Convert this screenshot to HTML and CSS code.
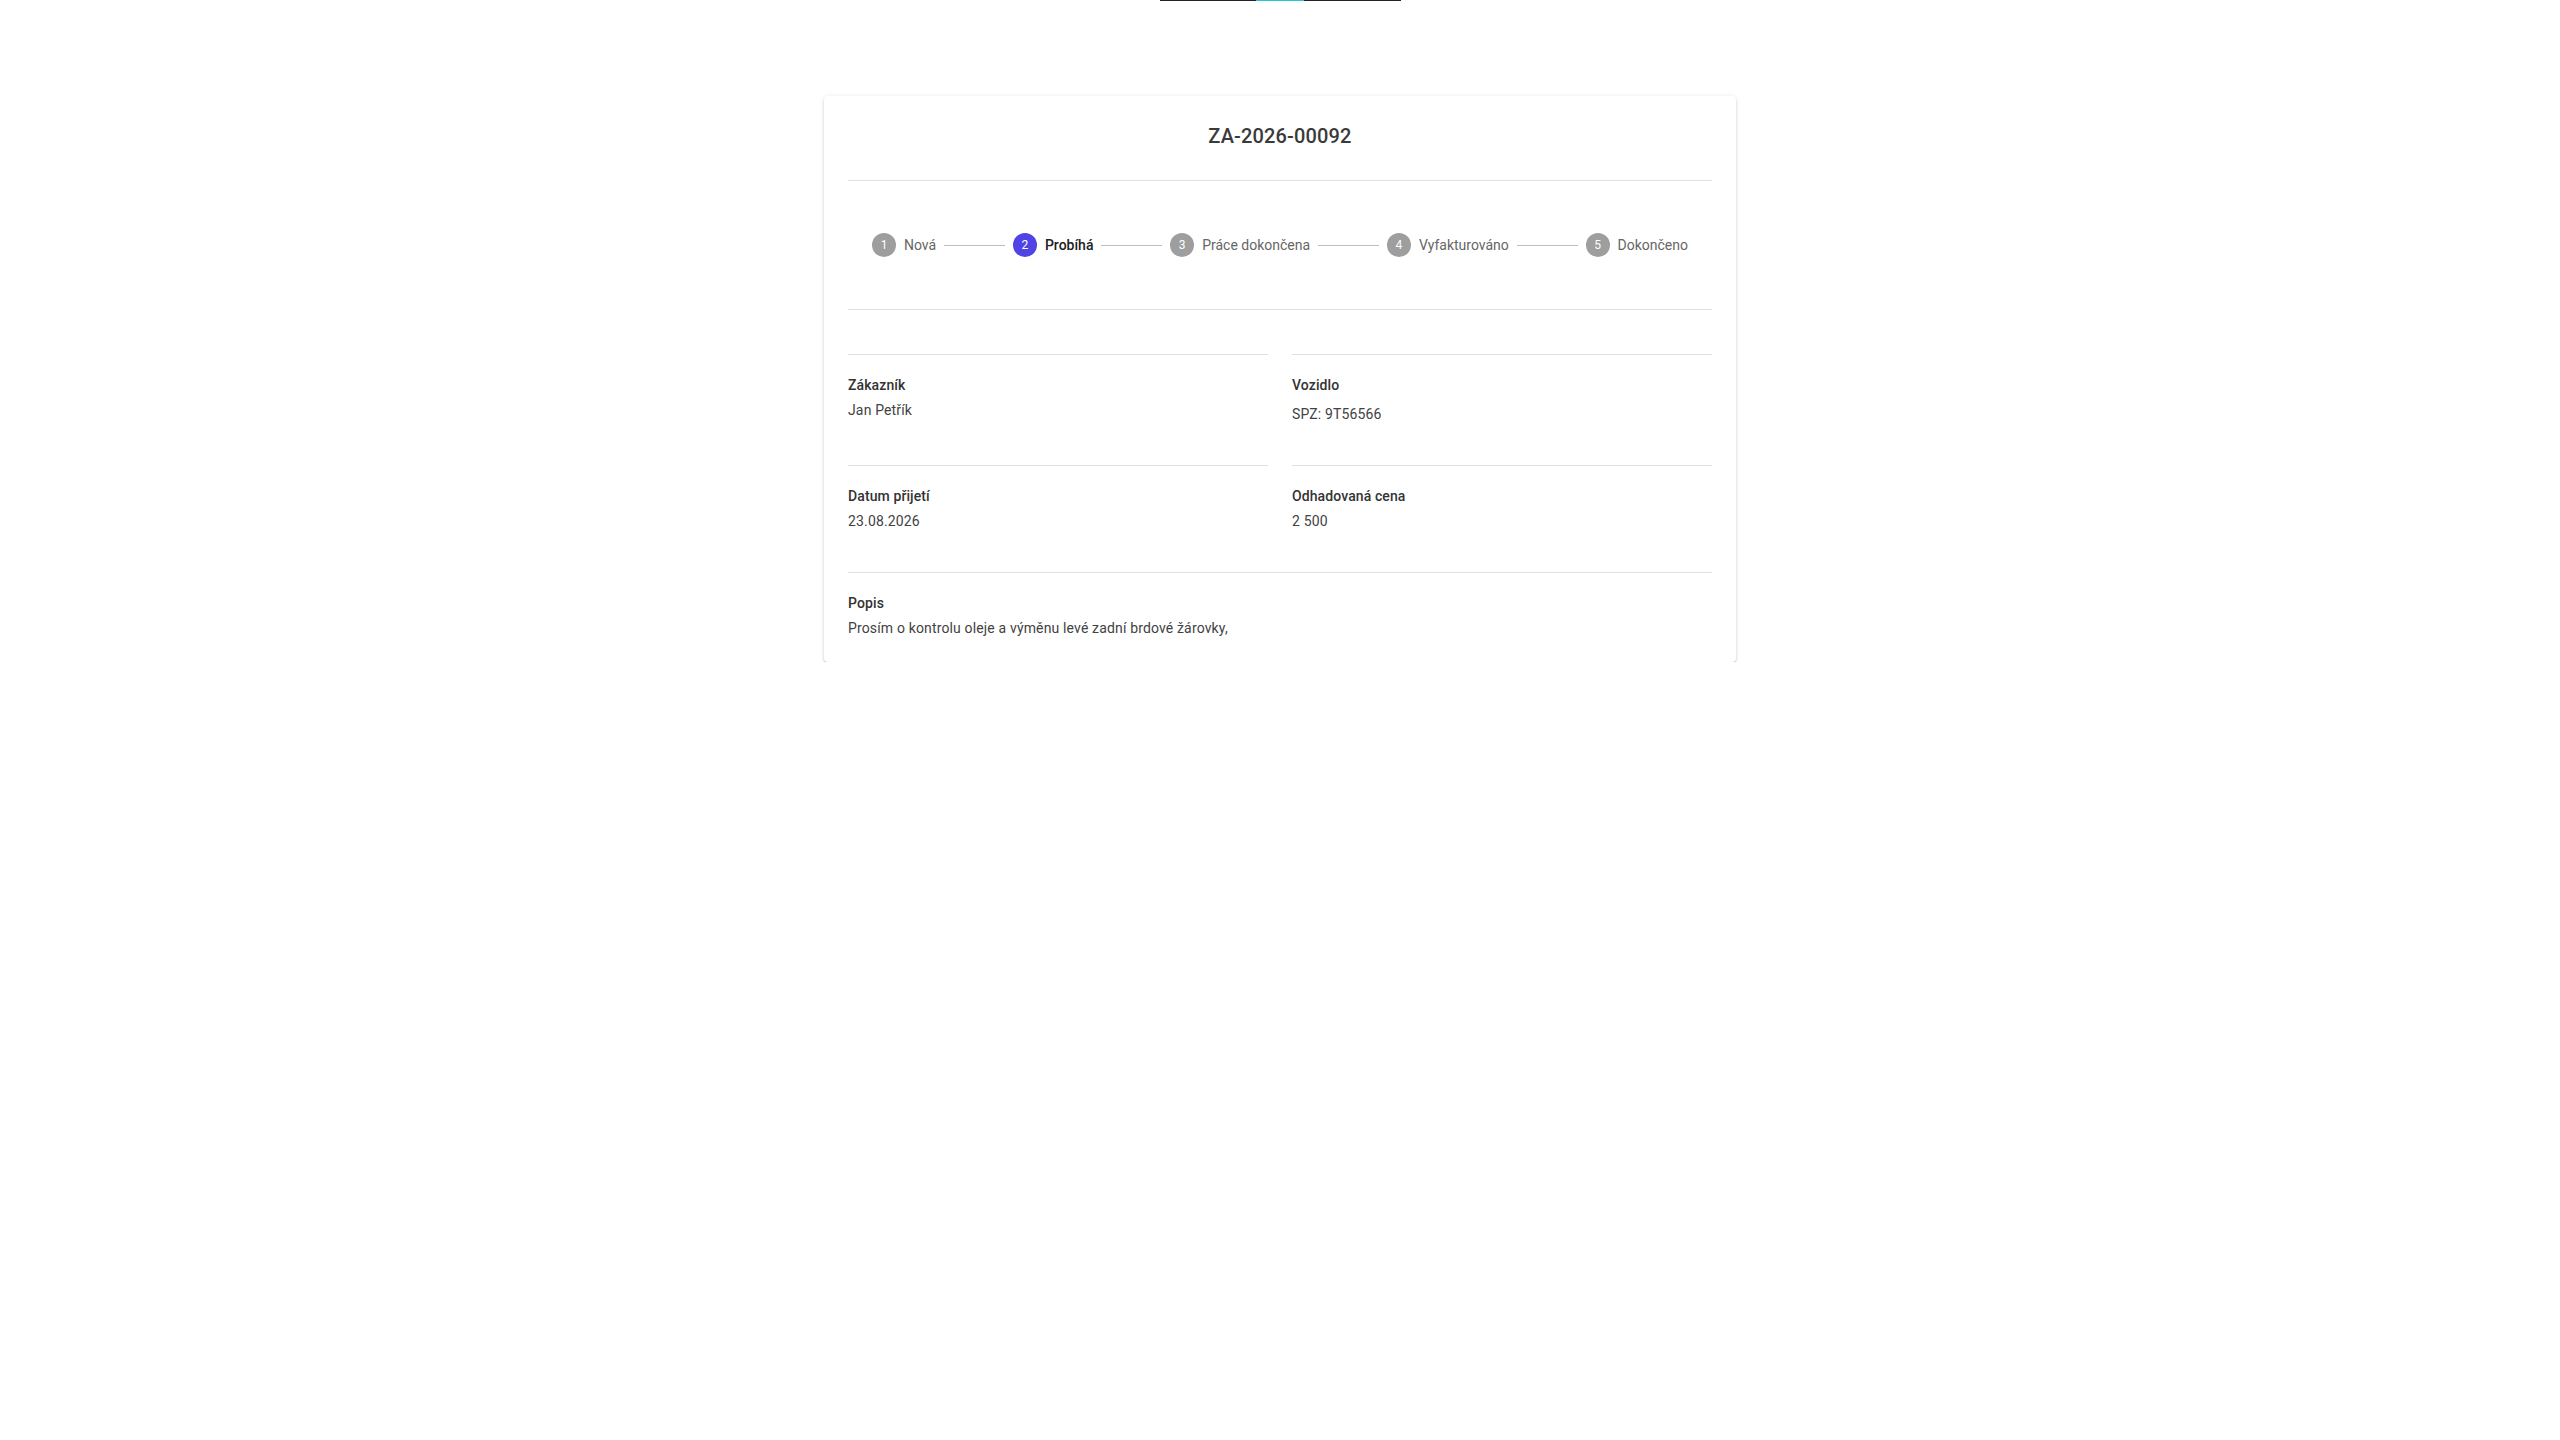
FILE: index.html
```html
<!DOCTYPE html>
<html lang="cs">

<head>
  <meta charset="UTF-8">
  <meta name="viewport" content="width=device-width, initial-scale=1.0">
  <title>ZA-2026-00092</title>
  <link rel="stylesheet" href="styles.css">
</head>

<body>
  <div class="tabs-bar">
    <div class="tabs-track">
      <span class="tabs-indicator"></span>
    </div>
  </div>

  <div class="order-card">
    <h2 class="order-title">ZA-2026-00092</h2>

    <div class="stepper">
      <div class="step">
        <span class="step-icon">1</span>
        <span class="step-label">Nová</span>
      </div>
      <div class="step-connector"></div>
      <div class="step active">
        <span class="step-icon">2</span>
        <span class="step-label">Probíhá</span>
      </div>
      <div class="step-connector"></div>
      <div class="step">
        <span class="step-icon">3</span>
        <span class="step-label">Práce dokončena</span>
      </div>
      <div class="step-connector"></div>
      <div class="step">
        <span class="step-icon">4</span>
        <span class="step-label">Vyfakturováno</span>
      </div>
      <div class="step-connector"></div>
      <div class="step">
        <span class="step-icon">5</span>
        <span class="step-label">Dokončeno</span>
      </div>
    </div>

    <div class="fields">
      <div class="field">
        <div class="field-label">Zákazník</div>
        <div class="field-value">Jan Petřík</div>
      </div>
      <div class="field">
        <div class="field-label">Vozidlo</div>
        <div class="field-value vehicle">SPZ: 9T56566</div>
      </div>
      <div class="field">
        <div class="field-label">Datum přijetí</div>
        <div class="field-value">23.08.2026</div>
      </div>
      <div class="field">
        <div class="field-label">Odhadovaná cena</div>
        <div class="field-value">2 500</div>
      </div>
      <div class="field wide">
        <div class="field-label">Popis</div>
        <div class="field-value">Prosím o kontrolu oleje a výměnu levé zadní brdové žárovky,</div>
      </div>
    </div>
  </div>
</body>

</html>
```

FILE: styles.css
```css
body {
  font-family: Roboto, "Noto Sans", Arial, sans-serif;
  margin: 0;
  padding: 0;
  background: #fff;
  color: #212121;
}

.tabs-bar {
  display: flex;
  justify-content: center;
}

.tabs-track {
  display: flex;
  width: 241px;
  height: 1px;
  background: #222;
}

.tabs-indicator {
  margin-left: 96px;
  width: 48px;
  background: #26c6da;
}

.order-card {
  width: 864px;
  margin: 95px auto 0;
  padding: 24px;
  background: #fff;
  border-radius: 4px;
  box-shadow: 0px 3px 1px -2px rgba(0, 0, 0, 0.2), 0px 2px 2px 0px rgba(0, 0, 0, 0.14), 0px 1px 5px 0px rgba(0, 0, 0, 0.12);
}

.order-title {
  margin: 0;
  padding-bottom: 28px;
  border-bottom: 1px solid #e0e0e0;
  font-size: 20px;
  font-weight: 500;
  line-height: 32px;
  letter-spacing: 0.15px;
  text-align: center;
  color: #3a3a3a;
}

/* stepper */
.stepper {
  display: flex;
  align-items: center;
  padding: 52px 16px;
  border-bottom: 1px solid #e0e0e0;
}

.step {
  display: flex;
  align-items: center;
  gap: 8px;
  padding: 0 8px;
}

.step-icon {
  display: flex;
  align-items: center;
  justify-content: center;
  width: 24px;
  height: 24px;
  border-radius: 50%;
  background: #9e9e9e;
  color: #fff;
  font-size: 12px;
}

.step-label {
  font-size: 14px;
  line-height: 20px;
  color: #666;
}

.step.active .step-icon {
  background: #5044e4;
}

.step.active .step-label {
  color: #212121;
  font-weight: 500;
}

.step-connector {
  flex: 1 1 auto;
  border-top: 1px solid #bdbdbd;
}

/* detail fields */
.fields {
  display: grid;
  grid-template-columns: 1fr 1fr;
  column-gap: 24px;
  margin-top: 44px;
}

.field {
  border-top: 1px solid #e0e0e0;
  padding: 20px 0 41px;
}

.field.wide {
  grid-column: 1 / -1;
  padding-bottom: 0;
}

.field-label {
  font-size: 14px;
  font-weight: 500;
  line-height: 20px;
  letter-spacing: 0.1px;
  color: #333;
  margin-bottom: 5px;
}

.field-value {
  font-size: 14px;
  line-height: 20px;
  letter-spacing: 0.15px;
  color: #424242;
}

.field-value.vehicle {
  padding-top: 4px;
}
```
